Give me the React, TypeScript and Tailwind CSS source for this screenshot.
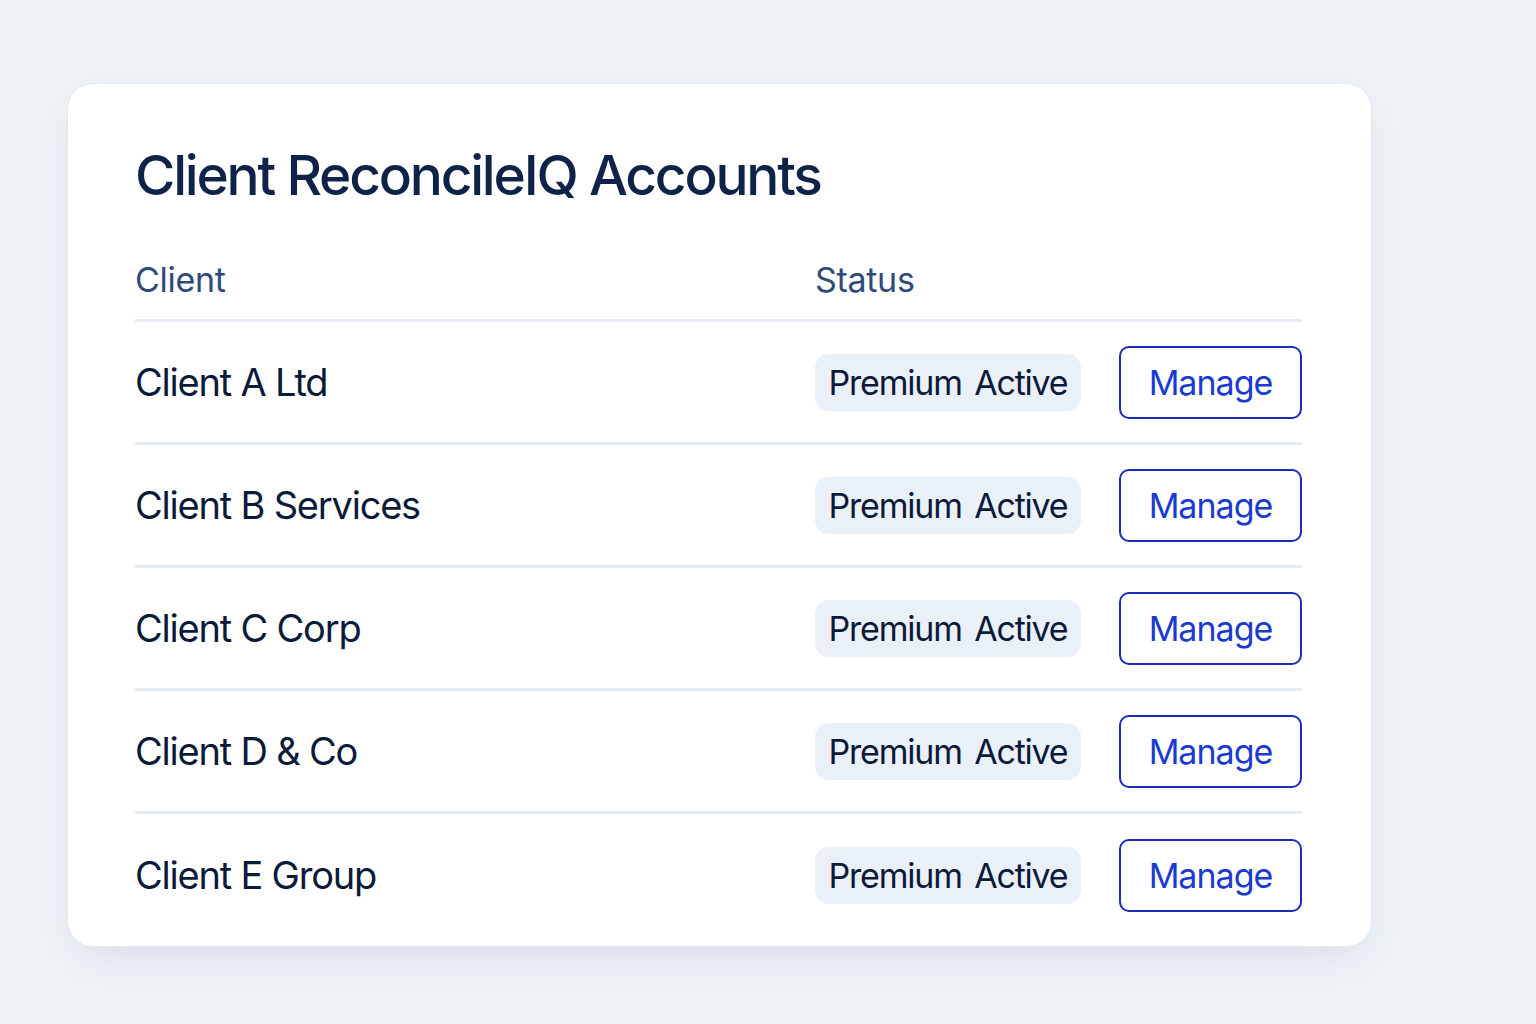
const clients = [
  "Client A Ltd",
  "Client B Services",
  "Client C Corp",
  "Client D & Co",
  "Client E Group",
];

export default function App() {
  return (
    <div className="min-h-screen w-full bg-[#eef2f7] pt-[83px] pl-[67px] font-['Inter',sans-serif]">
      <div className="w-[1305px] h-[864px] rounded-[26px] bg-white border border-[#e4e9f1] shadow-[0_16px_40px_-12px_rgba(30,50,90,0.12)] pl-[67px] pr-[69px] pt-[56px]">
        <h1 className="text-[55px] leading-[70px] font-medium text-[#0f2248] tracking-[-2.2px]">
          Client ReconcileIQ Accounts
        </h1>

        <div className="mt-[30px] flex items-center h-[82px] border-b-[3px] border-[#e6ecf4] text-[34px] text-[#2f4a7a] tracking-[-0.3px]">
          <div className="w-[680px]">Client</div>
          <div>Status</div>
        </div>

        {clients.map((name, i) => (
          <div
            key={name}
            className={`flex items-center h-[123px] ${
              i < clients.length - 1 ? "border-b-[3px] border-[#e6ecf4]" : ""
            }`}
          >
            <div className="w-[680px] text-[38px] text-[#0c1a3a] tracking-[-1.2px]">{name}</div>
            <span className="w-[266px] h-[57px] flex items-center justify-center rounded-[14px] bg-[#eaf0f8] text-[34px] text-[#0c1a3a] tracking-[-1.2px] [word-spacing:4px]">
              Premium Active
            </span>
            <button className="ml-auto w-[183px] h-[73px] rounded-[10px] border-2 border-[#1a2db5] text-[34px] text-[#1b3bd0] tracking-[-1px]">
              Manage
            </button>
          </div>
        ))}
      </div>
    </div>
  );
}
